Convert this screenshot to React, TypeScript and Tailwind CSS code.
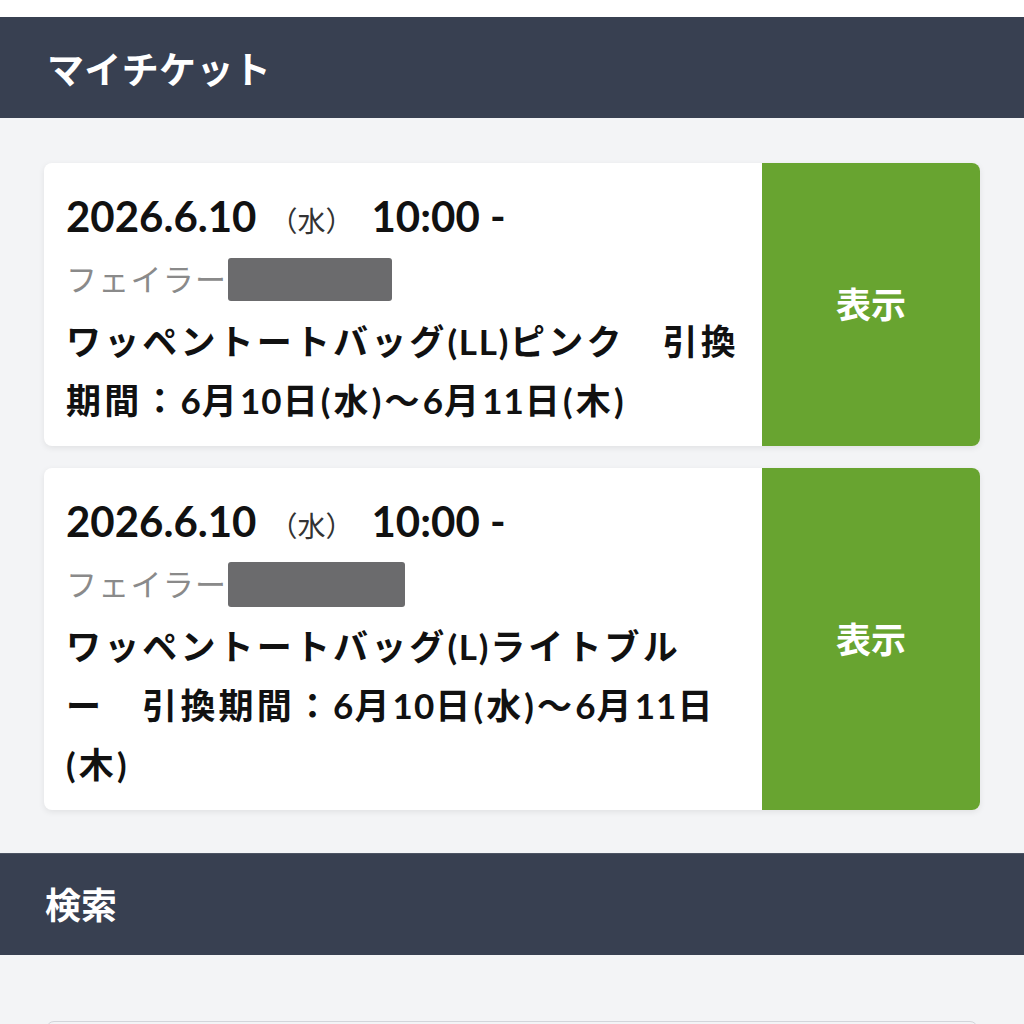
import React from "react";

function Redact({ w, h }: { w: string; h: string }) {
  return <span className={`inline-block ml-[1px] rounded-[3px] bg-[#6b6b6d] ${w} ${h}`} />;
}

function Line({ text }: { text: string }) {
  const parts = text.split(/(\d+|\([A-Za-z]+\))/);
  return (
    <div className="text-[35px] font-bold leading-[59px] tracking-[0.09em] whitespace-nowrap">
      {parts.map((p, i) =>
        /^\d+$/.test(p) ? (
          <span key={i} className="tracking-[0.03em]">
            {p}
          </span>
        ) : /^\([A-Za-z]+\)$/.test(p) ? (
          <span key={i} className="tracking-[0.05em]">
            {p}
          </span>
        ) : (
          <React.Fragment key={i}>{p}</React.Fragment>
        )
      )}
    </div>
  );
}

function Ticket({
  redactW,
  redactH,
  lines,
}: {
  redactW: string;
  redactH: string;
  lines: string[];
}) {
  return (
    <div className="flex rounded-[8px] bg-white overflow-hidden shadow-[0_2px_6px_rgba(0,0,0,0.08)]">
      <div className="flex-1 min-w-0 pl-[22px] pr-[20px] pt-[23px] pb-[16px] text-[#111]">
        <div className="flex items-baseline h-[60px] leading-[60px] whitespace-nowrap">
          <span className="text-[42px] font-bold">2026.6.10</span>
          <span className="text-[28px] ml-[13px] text-[#333]">（水）</span>
          <span className="text-[42px] font-bold ml-[18px]">10:00 -</span>
        </div>
        <div className="flex items-center h-[66px] whitespace-nowrap">
          <span className="text-[31px] text-[#8a8a8a] tracking-[0.04em]">フェイラー</span>
          <Redact w={redactW} h={redactH} />
        </div>
        {lines.map((l, i) => (
          <Line key={i} text={l} />
        ))}
      </div>
      <div className="w-[218px] shrink-0 bg-[#68a430] flex items-center justify-center text-white text-[35px] font-bold">
        表示
      </div>
    </div>
  );
}

export default function App() {
  return (
    <div className="min-h-screen bg-[#f3f4f6] font-['Lato','Noto_Sans_CJK_JP',sans-serif]">
      <div className="h-[17px] bg-white" />
      <header className="h-[101px] bg-[#384051] flex items-center px-[47px]">
        <h2 className="text-white text-[37px] font-semibold tracking-[0.01em] translate-y-[2px]">マイチケット</h2>
      </header>
      <section className="px-[44px] pt-[45px] pb-[43px] flex flex-col gap-[22px]">
        <Ticket
          redactW="w-[164px]"
          redactH="h-[43px]"
          lines={["ワッペントートバッグ(LL)ピンク　引換", "期間：6月10日(水)〜6月11日(木)"]}
        />
        <Ticket
          redactW="w-[177px]"
          redactH="h-[45px]"
          lines={["ワッペントートバッグ(L)ライトブル", "ー　引換期間：6月10日(水)〜6月11日", "(木)"]}
        />
      </section>
      <header className="h-[102px] bg-[#384051] flex items-center px-[45px] border-t border-[#6b7280]/40">
        <h2 className="text-white text-[36px] font-semibold">検索</h2>
      </header>
      <div className="px-[46px] pt-[66px]">
        <div className="h-[60px] rounded-[8px] border border-[#d3d5da] bg-[#f3f4f6]" />
      </div>
    </div>
  );
}
